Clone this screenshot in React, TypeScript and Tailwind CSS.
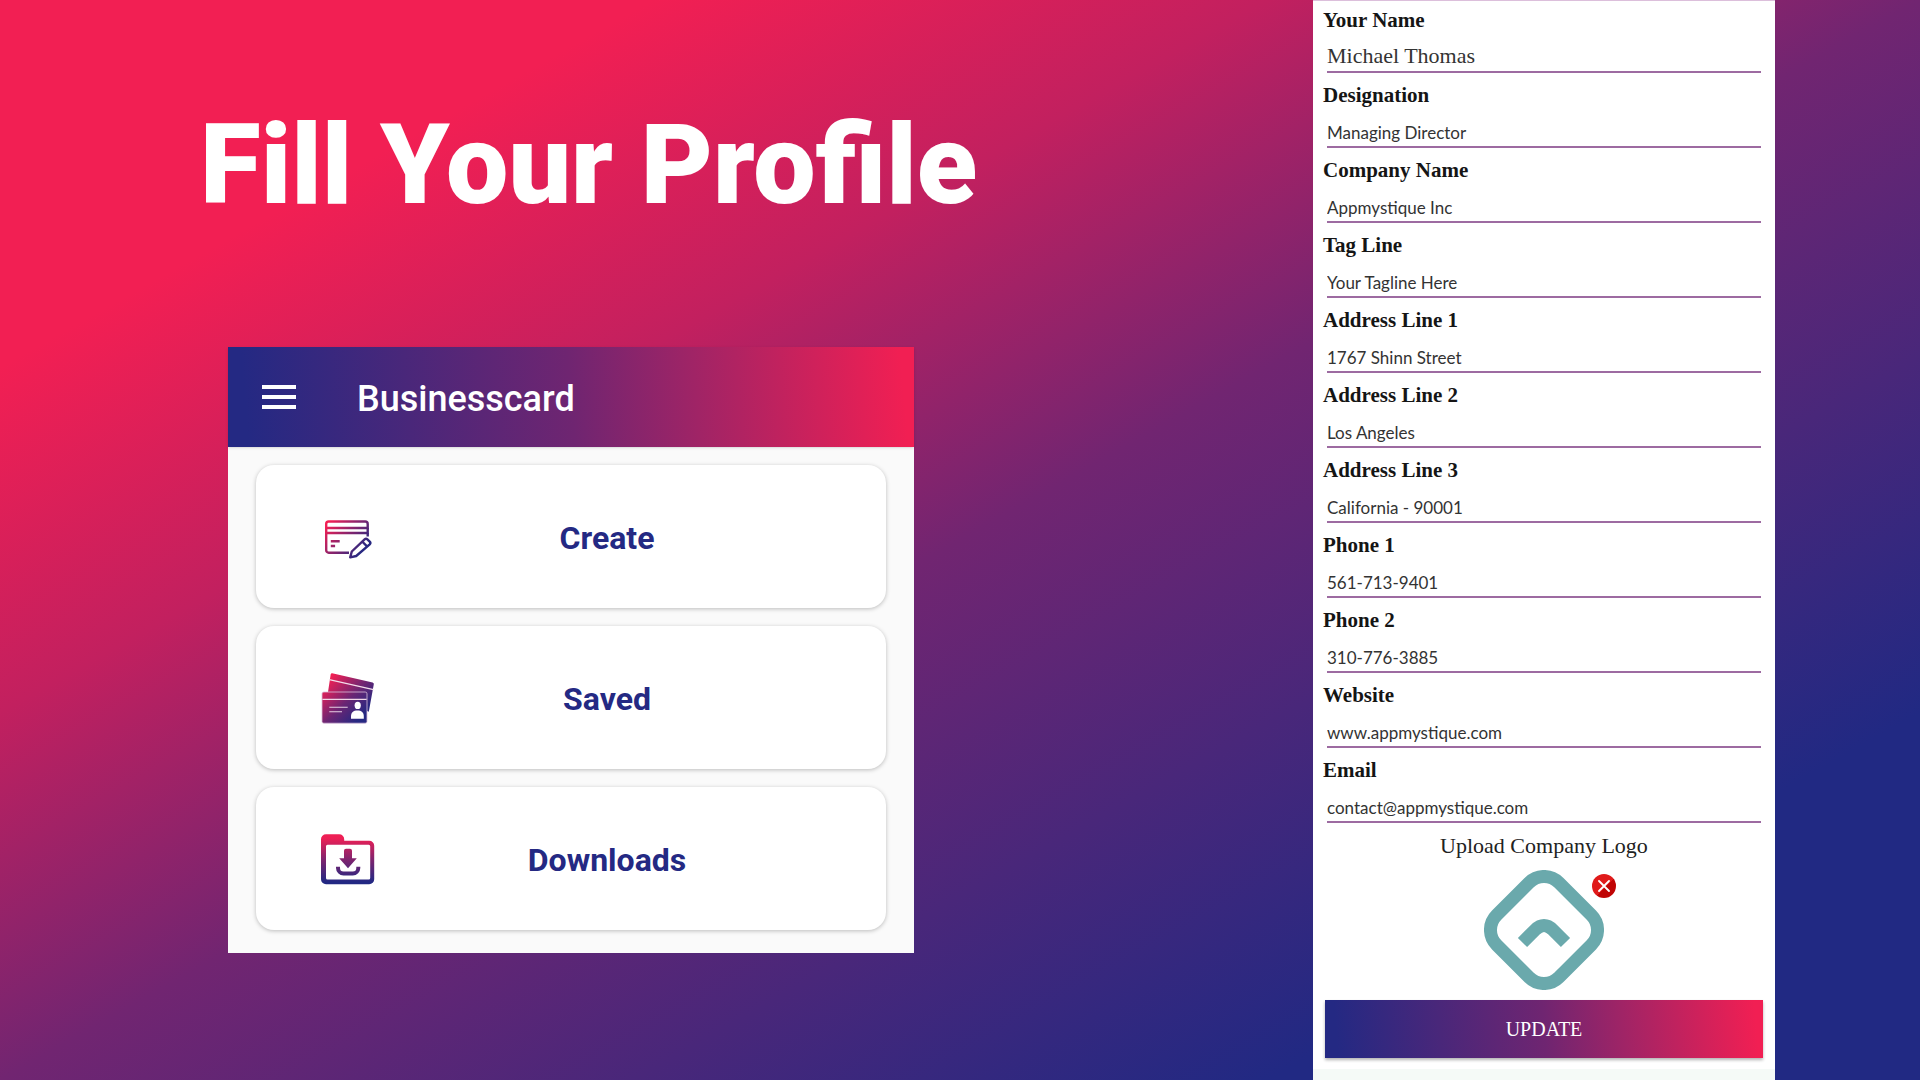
interface Field {
  id: string;
  label: string;
  value: string;
  type?: string;
  serif?: boolean;
}

const fields: Field[] = [
  { id: "name", label: "Your Name", value: "Michael Thomas", serif: true },
  { id: "designation", label: "Designation", value: "Managing Director" },
  { id: "company", label: "Company Name", value: "Appmystique Inc" },
  { id: "tagline", label: "Tag Line", value: "Your Tagline Here" },
  { id: "address1", label: "Address Line 1", value: "1767 Shinn Street" },
  { id: "address2", label: "Address Line 2", value: "Los Angeles" },
  { id: "address3", label: "Address Line 3", value: "California - 90001" },
  { id: "phone1", label: "Phone 1", value: "561-713-9401", type: "tel" },
  { id: "phone2", label: "Phone 2", value: "310-776-3885", type: "tel" },
  { id: "website", label: "Website", value: "www.appmystique.com" },
  { id: "email", label: "Email", value: "contact@appmystique.com", type: "email" },
];

function CreateIcon() {
  return (
    <svg viewBox="0 0 56 56" className="h-14 w-14 shrink-0" fill="none" aria-hidden="true">
      <defs>
        <linearGradient id="createFill" gradientUnits="userSpaceOnUse" x1="8" y1="14" x2="42" y2="42">
          <stop offset="0" stopColor="#f31f53" />
          <stop offset="0.5" stopColor="#8a246c" />
          <stop offset="1" stopColor="#272881" />
        </linearGradient>
      </defs>
      <g stroke="url(#createFill)" strokeWidth="2.4">
        <path d="M47.7 27.5V15a2.5 2.5 0 0 0-2.5-2.5H8.7A2.5 2.5 0 0 0 6.2 15v26.2a2.5 2.5 0 0 0 2.5 2.5H29" />
        <path d="M6.2 19.01h41.5v-.01M6.2 24.01h41.5v-.01" />
        <path d="M10.8 32.2l8.9-.01M10.8 37l4.3-.01" />
        <path
          d="M30.2 48.3l1.6-5.8L44.6 30.4a2 2 0 0 1 2.8 0l2.3 2.2a2 2 0 0 1 0 2.8L36.2 47z"
          strokeLinejoin="round"
        />
        <path d="M42.2 32.5l4.8 4.9" />
      </g>
    </svg>
  );
}

function SavedIcon() {
  return (
    <svg viewBox="0 0 56 56" className="h-14 w-14 shrink-0" aria-hidden="true">
      <defs>
        <linearGradient id="savedBack" gradientUnits="userSpaceOnUse" x1="12" y1="6" x2="46" y2="38">
          <stop offset="0" stopColor="#f01f54" />
          <stop offset="0.55" stopColor="#7a2570" />
          <stop offset="1" stopColor="#2a2880" />
        </linearGradient>
        <linearGradient id="savedFront" gradientUnits="userSpaceOnUse" x1="4" y1="24" x2="34" y2="54">
          <stop offset="0" stopColor="#d5205b" />
          <stop offset="0.5" stopColor="#6a2573" />
          <stop offset="1" stopColor="#262882" />
        </linearGradient>
      </defs>
      <path d="M12.2 3.2L52.6 12.4a1.6 1.6 0 0 1 1.2 1.9L48.8 41.7 7.7 24l3-19.8a1.4 1.4 0 0 1 1.5-1z" fill="url(#savedBack)" />
      <path d="M9.3 9.6l44.2 10" stroke="#f3dcea" strokeWidth="1.2" />
      <rect x="2" y="22" width="45" height="31.2" rx="1.8" fill="url(#savedFront)" stroke="#d9bfda" strokeWidth="0.8" />
      <path d="M2.4 29.4h44.2" stroke="#f0d6e6" strokeWidth="1.1" />
      <path d="M9.3 37.2h18.4M9.3 41.8H22" stroke="#e6d0e4" strokeWidth="1.1" />
      <ellipse cx="37.7" cy="35.4" rx="3.1" ry="3.7" fill="#fff" />
      <path d="M31 48.8v-2.4c0-4 2.4-5.8 6.4-5.8s6.4 1.8 6.4 5.8v2.4z" fill="#fff" />
    </svg>
  );
}

function DownloadsIcon() {
  return (
    <svg viewBox="0 0 56 56" className="h-14 w-14 shrink-0" aria-hidden="true">
      <defs>
        <linearGradient id="downloadFill" gradientUnits="userSpaceOnUse" x1="0" y1="7" x2="0" y2="51">
          <stop offset="0" stopColor="#ee1f55" />
          <stop offset="0.5" stopColor="#7d246f" />
          <stop offset="1" stopColor="#222883" />
        </linearGradient>
      </defs>
      <path
        fill="url(#downloadFill)"
        fillRule="evenodd"
        d="M6 3.2h13.2a5 5 0 0 1 5 5v1.6h25a5 5 0 0 1 5 5v33.4a5 5 0 0 1-5 5H6a5 5 0 0 1-5-5V8.2a5 5 0 0 1 5-5zM7.5 13.7A1.5 1.5 0 0 0 6 15.2v31.8a1.5 1.5 0 0 0 1.5 1.5h41.2a1.5 1.5 0 0 0 1.5-1.5V15.2a1.5 1.5 0 0 0-1.5-1.5z"
      />
      <path fill="url(#downloadFill)" d="M26 17.8h4a2 2 0 0 1 2 2v7.4h4.8L28 37.3l-8.8-10.1H24v-7.4a2 2 0 0 1 2-2z" />
      <path
        d="M18 35.8v1.2a5.5 5.5 0 0 0 5.5 5.5h9.3a5.5 5.5 0 0 0 5.5-5.5v-1.2"
        fill="none"
        stroke="url(#downloadFill)"
        strokeWidth="4"
      />
    </svg>
  );
}

function CompanyLogo() {
  return (
    <svg viewBox="-60 -60 120 120" className="h-[120px] w-[120px]" fill="none" stroke="#6aa9ac" role="img" aria-label="Company logo">
      <rect x="-44" y="-44" width="88" height="88" rx="21" strokeWidth="13" transform="rotate(45)" />
      <path d="M-21.5 12.5L-9 0Q0-9 9 0L21.5 12.5" strokeWidth="13" />
    </svg>
  );
}

const menu = [
  { title: "Create", Icon: CreateIcon },
  { title: "Saved", Icon: SavedIcon },
  { title: "Downloads", Icon: DownloadsIcon },
];

function MenuPanel() {
  return (
    <div className="w-full max-w-[686px] bg-[#fafafa] font-['Roboto',sans-serif]">
      <header className="flex h-[100px] items-center bg-[linear-gradient(85deg,#242983_3%,#6f2571_50%,#a02466_68%,#f11f53_98%)] pl-[34px] text-white shadow-sm">
        <button type="button" aria-label="Menu" className="flex w-[34px] flex-col gap-[6px]">
          <span className="h-1 w-full bg-white" />
          <span className="h-1 w-full bg-white" />
          <span className="h-1 w-full bg-white" />
        </button>
        <h2 className="pt-1 pl-[61px] text-[36px] font-medium">Businesscard</h2>
      </header>
      <nav className="flex flex-col gap-[18px] px-7 pt-[18px] pb-[23px]">
        {menu.map(({ title, Icon }) => (
          <button
            key={title}
            type="button"
            className="flex h-[143px] items-center rounded-[18px] bg-white pr-12 pl-16 shadow-[0_1px_4px_rgba(0,0,0,0.25)]"
          >
            <Icon />
            <span className="flex-1 pt-0.5 text-center text-[32px] font-bold text-[#242983]">{title}</span>
          </button>
        ))}
      </nav>
    </div>
  );
}

function ProfileField({ id, label, value, type, serif }: Field) {
  return (
    <div className="flex flex-col">
      <label htmlFor={id} className="text-[21px] leading-6 font-bold text-[#151515]">
        {label}
      </label>
      <input
        id={id}
        type={type ?? "text"}
        defaultValue={value}
        className={`ml-1 h-[41px] border-b-2 border-[#9d6ba1] text-[#333] outline-none ${
          serif ? "pt-2 font-['Liberation_Serif',serif] text-[22px]" : "pt-3 font-['Lato',sans-serif] text-[17px]"
        }`}
      />
    </div>
  );
}

function ProfileForm() {
  return (
    <form className="mr-[145px] flex w-[462px] shrink-0 flex-col border-t border-[#dcbfdb] bg-white font-['Liberation_Serif',serif]">
      <div className="flex flex-col gap-[10px] pt-[7px] pr-[14px] pl-[10px]">
        {fields.map((field) => (
          <ProfileField key={field.id} {...field} />
        ))}
      </div>
      <p className="pt-[9px] text-center text-[22px] leading-7 text-[#222]">Upload Company Logo</p>
      <div className="relative mt-[10px] self-center">
        <CompanyLogo />
        <button
          type="button"
          aria-label="Remove logo"
          className="absolute top-1 -right-3 flex h-6 w-6 items-center justify-center rounded-full bg-[linear-gradient(135deg,#e01a1a_55%,#c00404_55%)]"
        >
          <svg viewBox="0 0 12 12" className="h-3 w-3" stroke="#fff" strokeWidth="1.8" strokeLinecap="round" aria-hidden="true">
            <path d="M1 1l10 10M11 1L1 11" />
          </svg>
        </button>
      </div>
      <button
        type="submit"
        className="mx-3 mt-[10px] h-[58px] bg-[linear-gradient(85deg,#242983_3%,#6f2571_50%,#a02466_68%,#f11f53_98%)] text-[20px] text-white shadow-[0_2px_3px_rgba(0,0,0,0.3)]"
      >
        UPDATE
      </button>
      <div className="mt-[11px] min-h-[11px] flex-1 bg-[#f5faf7]" />
    </form>
  );
}

export default function App() {
  return (
    <main className="flex min-h-screen bg-[linear-gradient(to_bottom_right,#f21f53_17%,#c2205f_33%,#712571_50%,#212983_83%)]">
      <section className="min-w-0 flex-1 pt-[105px] pl-[200px]">
        <h1 className="font-['Roboto',sans-serif] text-[111px] leading-[120px] font-black text-white">Fill Your Profile</h1>
        <div className="pt-[122px] pl-7">
          <MenuPanel />
        </div>
      </section>
      <ProfileForm />
    </main>
  );
}
